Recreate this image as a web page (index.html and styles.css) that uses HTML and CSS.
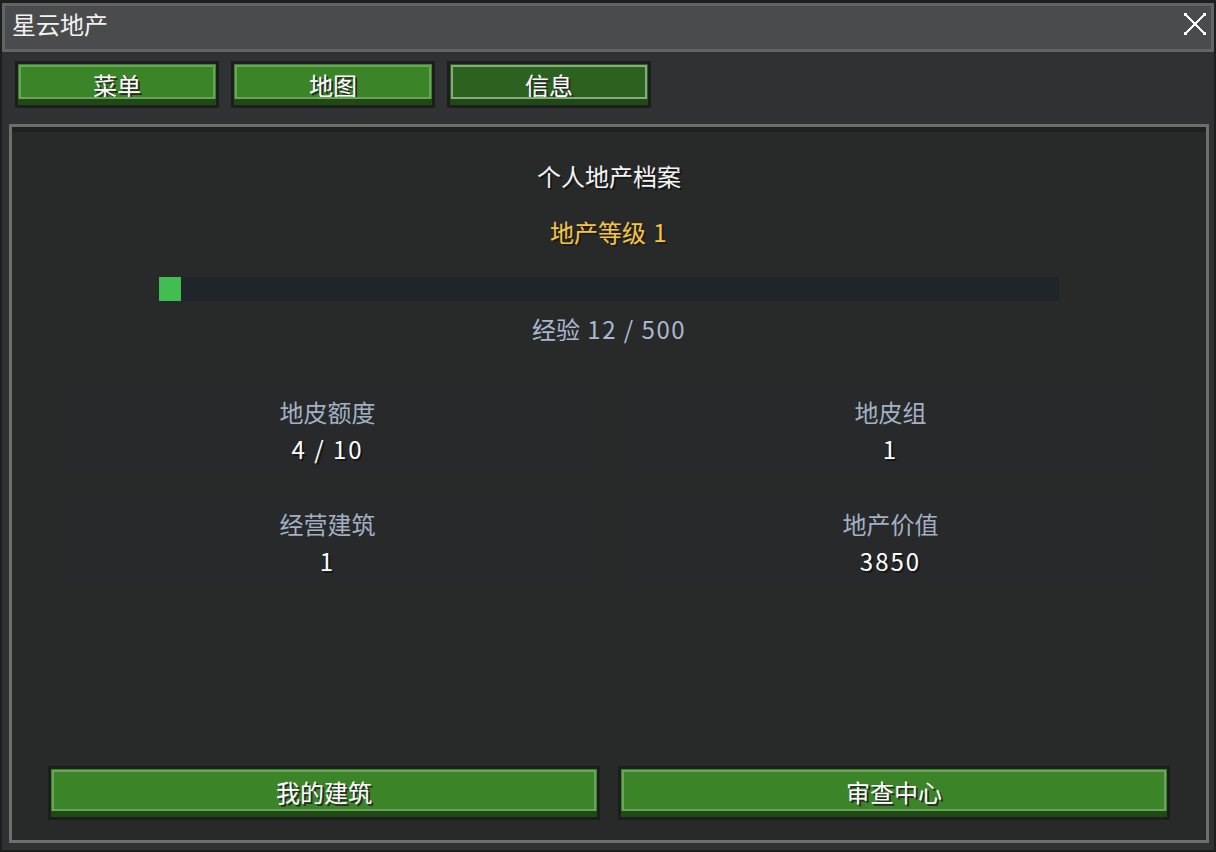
FILE: index.html
```html
<!DOCTYPE html>
<html lang="zh-CN">
<head>
<meta charset="utf-8">
<title>星云地产</title>
<link rel="stylesheet" href="styles.css">
</head>
<body>
<div class="window">
  <div class="titlebar">
    <span class="title">星云地产</span>
    <span class="close" aria-label="关闭">
      <svg width="22" height="22" viewBox="0 0 22 22" shape-rendering="crispEdges">
        <path d="M1.5 1.5L20.5 20.5M20.5 1.5L1.5 20.5" stroke="#ffffff" stroke-width="2" fill="none"/>
        <rect x="0" y="0" width="3" height="3" fill="#ffffff"/>
        <rect x="19" y="0" width="3" height="3" fill="#ffffff"/>
        <rect x="0" y="19" width="3" height="3" fill="#ffffff"/>
        <rect x="19" y="19" width="3" height="3" fill="#ffffff"/>
      </svg>
    </span>
  </div>
  <div class="body">
    <div class="tabs">
      <div class="btn tab">菜单</div>
      <div class="btn tab">地图</div>
      <div class="btn tab active">信息</div>
    </div>
    <div class="panel">
      <div class="panel-inner">
        <div class="heading">个人地产档案</div>
        <div class="level">地产等级 <span class="num">1</span></div>
        <div class="bar"><div class="fill" style="width:2.4%"></div></div>
        <div class="exp">经验 <span class="num">12 / 500</span></div>
        <div class="stats">
          <div class="card"><div class="label">地皮额度</div><div class="value">4 / 10</div></div>
          <div class="card"><div class="label">地皮组</div><div class="value">1</div></div>
          <div class="card"><div class="label">经营建筑</div><div class="value">1</div></div>
          <div class="card"><div class="label">地产价值</div><div class="value">3850</div></div>
        </div>
        <div class="actions">
          <div class="btn big">我的建筑</div>
          <div class="btn big">审查中心</div>
        </div>
      </div>
    </div>
  </div>
</div>
</body>
</html>
```

FILE: styles.css
```css
html, body {
  margin: 0;
  padding: 0;
  overflow: hidden;
}
body {
  background: #1d1e1e;
  width: 1216px;
  height: 852px;
  font-family: "Noto Sans CJK SC", "Noto Sans", sans-serif;
  color: #ffffff;
}
.window {
  box-sizing: border-box;
  width: 1212px;
  height: 847px;
  margin: 3px 0 0 2px;
  display: flex;
  flex-direction: column;
  background: #303133;
}
.titlebar {
  box-sizing: border-box;
  height: 49px;
  flex: none;
  border: 3px solid #626365;
  background: #4a4b4d;
  display: flex;
  align-items: flex-start;
  justify-content: space-between;
  padding: 2px 5px 0 7px;
}
.title {
  font-size: 24px;
  line-height: 32px;
  color: #f2f2f2;
}
.close {
  display: block;
  width: 22px;
  height: 22px;
  margin-top: 5px;
}
.close svg {
  display: block;
}
.body {
  flex: 1;
  display: flex;
  flex-direction: column;
  min-height: 0;
}
.tabs {
  display: flex;
  gap: 12px;
  padding: 9px 0 0 13px;
  flex: none;
}
.btn {
  box-sizing: border-box;
  position: relative;
  border: 3px solid #1c1d1d;
  background: #3c8428;
  box-shadow: inset 0 -6px 0 #1f4a16;
  color: #ffffff;
  font-size: 24px;
  text-align: center;
  text-shadow: 2px 2px 0 #2a2b2a;
}
.btn::before {
  content: "";
  position: absolute;
  left: 1px;
  right: 1px;
  top: 1px;
  bottom: 6px;
  border: 2px solid #6aa35b;
  pointer-events: none;
}
.tab {
  width: 204px;
  height: 47px;
  line-height: 41px;
}
.tab.active {
  background: #2b6220;
}
.tab.active::before {
  border-color: #88a980;
}
.panel {
  flex: 1;
  margin: 16px 5px 7px 7px;
  border: 3px solid #6b706d;
  background: #282a29;
  display: flex;
  flex-direction: column;
  min-height: 0;
}
.panel-inner {
  flex: 1;
  display: flex;
  flex-direction: column;
  align-items: center;
  border-top: 5px solid #1f2020;
  padding-top: 28px;
}
.heading {
  font-size: 24px;
  line-height: 32px;
  color: #f4f4f4;
  text-shadow: 2px 2px 0 rgba(0, 0, 0, 0.45);
}
.level {
  margin-top: 24px;
  font-size: 24px;
  line-height: 32px;
  color: #f6c444;
  text-shadow: 2px 2px 0 rgba(0, 0, 0, 0.3);
}
.num {
  letter-spacing: 1.5px;
  margin-left: 2px;
}
.bar {
  margin-top: 29px;
  width: 900px;
  height: 24px;
  background: #20242b;
}
.fill {
  height: 100%;
  background: #41bd52;
}
.exp {
  margin-top: 12px;
  font-size: 24px;
  line-height: 32px;
  color: #a9b8d0;
}
.stats {
  margin-top: 40px;
  display: grid;
  grid-template-columns: 527px 527px;
  gap: 22px 36px;
}
.card {
  height: 90px;
  background: #27292a;
  display: flex;
  flex-direction: column;
  align-items: center;
  justify-content: center;
}
.label {
  font-size: 24px;
  line-height: 30px;
  color: #a3b0c3;
}
.value {
  margin-top: 7px;
  font-size: 24px;
  line-height: 30px;
  color: #ffffff;
  letter-spacing: 2px;
  text-shadow: 2px 2px 0 rgba(0, 0, 0, 0.45);
}
.actions {
  margin-top: auto;
  align-self: stretch;
  display: flex;
  gap: 18px;
  padding: 0 36px 20px 36px;
}
.big {
  flex: 1;
  height: 54px;
  line-height: 46px;
}
```
